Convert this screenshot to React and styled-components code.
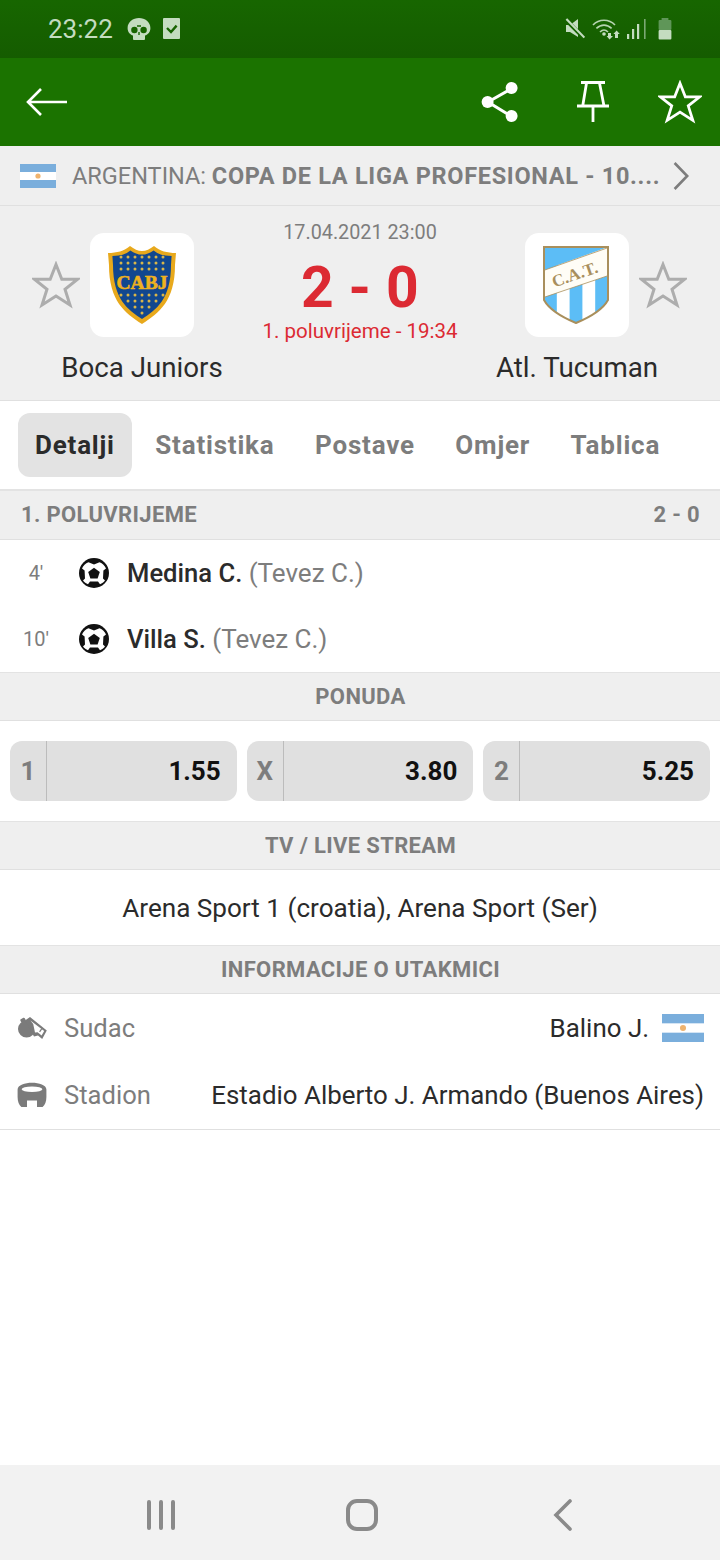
import React from 'react'
import styled, { createGlobalStyle } from 'styled-components'

const GlobalStyle = createGlobalStyle`
    html, body { margin: 0; padding: 0; background: #fff; }
    body { font-family: Roboto, "Noto Sans", sans-serif; }
    * { box-sizing: border-box; }
`

const Flag = ({ width, height }) => (
    <svg width={width} height={height} viewBox="0 0 36 24">
        <rect width="36" height="24" fill="#7aaedc" />
        <rect y="8" width="36" height="8" fill="#fff" />
        <circle cx="18" cy="12" r="2.6" fill="#efb36e" />
    </svg>
)

const Star = ({ size, color, stroke = 2 }) => (
    <svg width={size} height={size} viewBox="0 0 48 48">
        <path
            d="M24 3.5 L29.8 18.3 L45.6 18.3 L33 28.2 L38 44 L24 35 L10 44 L15 28.2 L2.4 18.3 L18.2 18.3 Z"
            fill="none"
            stroke={color}
            strokeWidth={stroke}
            strokeLinejoin="miter"
        />
    </svg>
)

const Ball = () => (
    <svg width="30" height="30" viewBox="0 0 30 30">
        <circle cx="15" cy="15" r="15" fill="#111" />
        <path d="M9.5 4.2 L15 6.6 L20.5 4.2 C23.6 5.4 25.8 7.6 27 10.4 L24.4 12.6 L24 20.4 L26 22.4 C24.6 24.2 23 25.4 21 26.2 L19 23.6 L11 23.6 L9 26.2 C7 25.4 5.4 24.2 4 22.4 L6 20.4 L5.6 12.6 L3 10.4 C4.2 7.6 6.4 5.4 9.5 4.2 Z" fill="#fff" />
        <path d="M15 9.8 L20.8 14 L18.6 20.4 L11.4 20.4 L9.2 14 Z" fill="#111" />
    </svg>
)

const Whistle = () => (
    <svg width="30" height="26" viewBox="0 0 30 26">
        <circle cx="9.6" cy="14" r="8.6" fill="#7b7b7b" />
        <rect x="3.6" y="3.4" width="5" height="4" rx="1" fill="#7b7b7b" transform="rotate(-30 6 5.4)" />
        <path d="M8 5.6 L13 2 L29.8 15.4 L25.2 24 L21 20.6 L17 21.6 Z" fill="#7b7b7b" />
        <path d="M13.4 5.4 L27.2 15.9 L24.6 20.6 L20.6 17.2 L18 17.4 L16.2 9 Z" fill="#fff" />
        <path d="M22.6 16.8 L24.8 13.6" stroke="#7b7b7b" strokeWidth="1.2" />
    </svg>
)

const Stadium = () => (
    <svg width="30" height="26" viewBox="0 0 30 26">
        <path
            d="M0.6 7.6 C0.6 3 8 0.8 15 0.8 C22 0.8 29.4 3 29.4 7.6 L29.4 15 C29.4 19.6 28 23 25.6 25 L20 25 L20 18.6 L10 18.6 L10 25 L4.4 25 C2 23 0.6 19.6 0.6 15 Z"
            fill="#7b7b7b"
        />
        <ellipse cx="15" cy="7.2" rx="10.4" ry="2.8" fill="#fff" />
    </svg>
)

const BocaCrest = () => (
    <svg width="70" height="80" viewBox="0 0 70 80">
        <path d="M35 79 C18 68 2 56 2 20 L1 8 C10 8 17 6 23 1 C27 4 31 6 35 6 C39 6 43 4 47 1 C53 6 60 8 69 8 L68 20 C68 56 52 68 35 79 Z" fill="#e8a91c" />
        <path d="M35 74 C21 65 6 54 6 20 L5.4 11 C13 11 19 9 23.4 5.4 C27 8 31 9.6 35 9.6 C39 9.6 43 8 46.6 5.4 C51 9 57 11 64.6 11 L64 20 C64 54 49 65 35 74 Z" fill="#11478f" />
        <text x="35" y="43.5" textAnchor="middle" fontFamily="Liberation Serif, serif" fontWeight="700" fontSize="19.5" fill="#efb21e" stroke="#efb21e" strokeWidth="0.6">CABJ</text>
        <g fill="#d9b64a">
            {[12, 18, 24].map((y, r) => [0, 1, 2, 3, 4, 5, 6].map(i => <circle key={`a${r}${i}`} cx={14 + i * 7} cy={y} r="1.5" />))}
            {[50, 56, 62, 68].map((y, r) => [0, 1, 2, 3, 4, 5, 6].slice(r, 7 - r).map(i => <circle key={`b${r}${i}`} cx={14 + i * 7} cy={y} r="1.5" />))}
        </g>
    </svg>
)

const shield = 'M2 2 L66 2 L66 55 C60 66 46 73 34 78 C22 73 8 66 2 55 Z'

const TucumanCrest = () => (
    <svg width="70" height="80" viewBox="0 0 70 80">
        <defs>
            <clipPath id="catShield"><path d={shield} /></clipPath>
        </defs>
        <g clipPath="url(#catShield)">
            <rect width="70" height="80" fill="#fff" />
            <path d="M2 2 L66 2 L2 25 Z" fill="#5cbdf6" />
            {[2, 27.6, 53.2].map(x => <rect key={x} x={x} y="20" width="12.8" height="60" fill="#5cbdf6" />)}
            <path d="M0 26 L68 2 L68 30 L0 53 Z" fill="#fffdf6" />
            <path d="M0 26 L68 2 M0 53 L68 30" stroke="#a98f5c" strokeWidth="0.8" />
        </g>
        <path d={shield} fill="none" stroke="#a98f5c" strokeWidth="2" />
        <text x="33" y="35" textAnchor="middle" fontFamily="Liberation Serif, serif" fontWeight="700" fontSize="17" fill="#a98f5c" transform="rotate(-19 33 30)">C.A.T.</text>
    </svg>
)

const events = [
    { minute: "4'", scorer: 'Medina C.', assist: '(Tevez C.)' },
    { minute: "10'", scorer: 'Villa S.', assist: '(Tevez C.)' },
]

const odds = [
    { label: '1', value: '1.55' },
    { label: 'X', value: '3.80' },
    { label: '2', value: '5.25' },
]

const tabs = ['Detalji', 'Statistika', 'Postave', 'Omjer', 'Tablica']

export default function App() {
    return (
        <Page>
            <GlobalStyle />
            <StatusBar>
                <StatusGroup>
                    <Clock>23:22</Clock>
                    <svg width="24" height="24" viewBox="0 0 24 24">
                        <path d="M12 1 C18 1 23.4 5 23.4 11 C23.4 15 21 17.6 18 18.6 L18 22 C18 22.8 17.4 23 16.6 23 L7.4 23 C6.6 23 6 22.8 6 22 L6 18.6 C3 17.6 0.6 15 0.6 11 C0.6 5 6 1 12 1 Z" fill="#c4dcc0" />
                        <circle cx="7.4" cy="13" r="3.2" fill="#176300" />
                        <circle cx="16.6" cy="13" r="3.2" fill="#176300" />
                        <path d="M10 9 L14 9 M12 15 L12 18" stroke="#176300" strokeWidth="1.4" />
                    </svg>
                    <svg width="18" height="22" viewBox="0 0 18 22">
                        <rect width="17" height="21" rx="1" fill="#c4dcc0" />
                        <path d="M4 10 L8 14 L13.6 7.6" fill="none" stroke="#176300" strokeWidth="2.4" />
                    </svg>
                </StatusGroup>
                <StatusIcons>
                    <svg width="20" height="22" viewBox="0 0 20 22">
                        <path d="M1 7 L5 7 L13 1 L13 19 L5 14 L1 14 Z" fill="#c4dcc0" />
                        <path d="M1 2 L19 20" stroke="#176300" strokeWidth="4" />
                        <path d="M1.4 1 L19.4 19.6" stroke="#c4dcc0" strokeWidth="2.2" />
                    </svg>
                    <svg width="28" height="22" viewBox="0 0 28 22">
                        <g fill="none" stroke="#b6d4b1" strokeWidth="1.6">
                            <path d="M1 7 C7 0.6 17 0.6 23 7" />
                            <path d="M4.4 10.4 C9 6 15 6 19.6 10.4" />
                            <path d="M8 14 C10.4 11.6 13.6 11.6 16 14" />
                        </g>
                        <circle cx="12" cy="16" r="1.8" fill="#c4dcc0" />
                        <path d="M16 15 L19 15 L19 18 L21 18 L17.5 21.4 L14.6 18 L16 18 Z M23 20 L23 16 L21.4 16 L24.6 12.6 L27.8 16 L26 16 L26 20 Z" fill="#c4dcc0" />
                    </svg>
                    <svg width="20" height="20" viewBox="0 0 20 20">
                        <rect x="0" y="15" width="2.2" height="5" fill="#c4dcc0" />
                        <rect x="5" y="10" width="2.2" height="10" fill="#c4dcc0" />
                        <rect x="10" y="5" width="2.2" height="15" fill="#c4dcc0" />
                        <rect x="17" y="0" width="1.6" height="20" fill="#7ba873" />
                    </svg>
                    <Battery>
                        <svg width="14" height="22" viewBox="0 0 14 22">
                            <rect x="3.6" y="0" width="6.8" height="3" fill="#5f9658" />
                            <rect x="0.6" y="2" width="12.8" height="10" rx="1" fill="#5f9658" />
                            <rect x="0.6" y="12" width="12.8" height="9.6" rx="1" fill="#c4dcc0" />
                        </svg>
                    </Battery>
                </StatusIcons>
            </StatusBar>

            <AppBar>
                <svg width="42" height="30" viewBox="0 0 42 30">
                    <path d="M41 15 L2 15 M15 2 L2 15 L15 28" fill="none" stroke="#fff" strokeWidth="2.6" />
                </svg>
                <AppActions>
                    <svg width="47" height="42" viewBox="0 0 47 42">
                        <path d="M30 8 L7 21 L30 35" fill="none" stroke="#fff" strokeWidth="3" />
                        <circle cx="30.6" cy="7" r="6" fill="#fff" />
                        <circle cx="6.6" cy="21" r="6" fill="#fff" />
                        <circle cx="30.6" cy="35" r="6" fill="#fff" />
                    </svg>
                    <svg width="34" height="44" viewBox="0 0 34 44">
                        <path d="M5 2.5 L29 2.5 M10.6 2.5 L6.7 26 M23.4 2.5 L28 26 M1 26 L33 26 M17 26 L17 42" fill="none" stroke="#fff" strokeWidth="2.8" />
                    </svg>
                    <Star size={44} color="#fff" stroke={3} />
                </AppActions>
            </AppBar>

            <LeagueBar>
                <Flag width={36} height={24} />
                <LeagueText>ARGENTINA: <b>COPA DE LA LIGA PROFESIONAL - 10....</b></LeagueText>
                <svg width="16" height="28" viewBox="0 0 16 28">
                    <path d="M1.6 1 L14.2 14 L1.6 27" fill="none" stroke="#7d7d7d" strokeWidth="2.6" />
                </svg>
            </LeagueBar>

            <MatchHeader>
                <Team>
                    <TeamRow>
                        <Star size={48} color="#adadad" stroke={3} />
                        <Crest><BocaCrest /></Crest>
                    </TeamRow>
                    <TeamName>Boca Juniors</TeamName>
                </Team>
                <Score>
                    <MatchDate>17.04.2021 23:00</MatchDate>
                    <ScoreValue>2 - 0</ScoreValue>
                    <MatchPhase>1. poluvrijeme - 19:34</MatchPhase>
                </Score>
                <Team $away>
                    <TeamRow>
                        <Crest><TucumanCrest /></Crest>
                        <Star size={48} color="#adadad" stroke={3} />
                    </TeamRow>
                    <TeamName $away>Atl. Tucuman</TeamName>
                </Team>
            </MatchHeader>

            <Tabs>
                {tabs.map((tab, i) => <Tab key={tab} $active={i === 0}>{tab}</Tab>)}
            </Tabs>

            <SectionHeader $spread>
                <span>1. POLUVRIJEME</span>
                <span>2 - 0</span>
            </SectionHeader>
            <Events>
                {events.map(e => (
                    <EventRow key={e.minute}>
                        <Minute>{e.minute}</Minute>
                        <Ball />
                        <Scorer>{e.scorer} <Assist>{e.assist}</Assist></Scorer>
                    </EventRow>
                ))}
            </Events>

            <SectionHeader>PONUDA</SectionHeader>
            <OddsRow>
                {odds.map(o => (
                    <Odd key={o.label}>
                        <OddLabel>{o.label}</OddLabel>
                        <OddValue>{o.value}</OddValue>
                    </Odd>
                ))}
            </OddsRow>

            <SectionHeader>TV / LIVE STREAM</SectionHeader>
            <StreamRow>Arena Sport 1 (croatia), Arena Sport (Ser)</StreamRow>

            <SectionHeader>INFORMACIJE O UTAKMICI</SectionHeader>
            <Info>
                <InfoRow>
                    <Whistle />
                    <InfoLabel>Sudac</InfoLabel>
                    <InfoValue>Balino J. <Flag width={42} height={28} /></InfoValue>
                </InfoRow>
                <InfoRow>
                    <Stadium />
                    <InfoLabel>Stadion</InfoLabel>
                    <InfoValue>Estadio Alberto J. Armando (Buenos Aires)</InfoValue>
                </InfoRow>
            </Info>

            <Spacer />

            <NavBar>
                <svg width="32" height="32" viewBox="0 0 32 32">
                    <path d="M4 3 L4 29 M16 3 L16 29 M28 3 L28 29" stroke="#8a8a8a" strokeWidth="4" strokeLinecap="round" />
                </svg>
                <svg width="32" height="32" viewBox="0 0 32 32">
                    <rect x="2" y="2" width="28" height="28" rx="9" fill="none" stroke="#8a8a8a" strokeWidth="4" />
                </svg>
                <svg width="26" height="32" viewBox="0 0 26 32">
                    <path d="M23 2 L9 16 L23 30" fill="none" stroke="#8a8a8a" strokeWidth="3.6" strokeLinecap="round" />
                </svg>
            </NavBar>
        </Page>
    )
}

const Page = styled.div`
    width: 720px;
    height: 1560px;
    display: flex;
    flex-direction: column;
    overflow: hidden;
    background: #ffffff;
`
const StatusBar = styled.div`
    height: 58px;
    flex: none;
    padding: 0 46px 0 48px;
    display: flex;
    align-items: center;
    justify-content: space-between;
    background: linear-gradient(#176600, #155c00);
`
const StatusGroup = styled.div`
    display: flex;
    align-items: center;
    gap: 12px;
`
const Clock = styled.span`
    color: #c4dcc0;
    font-size: 26px;
    margin-right: 2px;
`
const StatusIcons = styled.div`
    display: flex;
    align-items: center;
    gap: 7px;
`
const Battery = styled.span`
    display: flex;
    margin-left: 4px;
    margin-right: 2px;
`
const AppBar = styled.div`
    height: 88px;
    flex: none;
    padding: 0 18px 0 26px;
    display: flex;
    align-items: center;
    justify-content: space-between;
    background: #1b7300;
`
const AppActions = styled.div`
    display: flex;
    align-items: center;
    gap: 48px;
`
const LeagueBar = styled.div`
    height: 60px;
    flex: none;
    padding: 0 31px 0 20px;
    display: flex;
    align-items: center;
    gap: 16px;
    background: #efefef;
    border-bottom: 1px solid #e0e0e0;
    svg { flex: none; }
`
const LeagueText = styled.div`
    flex: 1;
    min-width: 0;
    color: #7d7d7d;
    font-size: 23.5px;
    white-space: nowrap;
    b { font-weight: 700; letter-spacing: 0.7px; }
`
const MatchHeader = styled.div`
    height: 195px;
    flex: none;
    padding-top: 27px;
    display: flex;
    background: #efefef;
    border-bottom: 1px solid #e0e0e0;
`
const Team = styled.div`
    width: 250px;
    flex: none;
    display: flex;
    flex-direction: column;
    align-items: flex-start;
    padding-left: ${p => (p.$away ? '55px' : '32px')};
`
const TeamRow = styled.div`
    display: flex;
    align-items: center;
    gap: 10px;
`
const Crest = styled.div`
    width: 104px;
    height: 104px;
    border-radius: 14px;
    background: #ffffff;
    display: flex;
    align-items: center;
    justify-content: center;
`
const TeamName = styled.div`
    width: 220px;
    margin-top: 14px;
    margin-left: ${p => (p.$away ? '-58px' : '0')};
    text-align: center;
    color: #2b2b2b;
    font-size: 27.7px;
    line-height: 34px;
    white-space: nowrap;
`
const Score = styled.div`
    flex: 1;
    display: flex;
    flex-direction: column;
    align-items: center;
`
const MatchDate = styled.div`
    margin-top: -13px;
    color: #7d7d7d;
    font-size: 19.8px;
    line-height: 26px;
`
const ScoreValue = styled.div`
    margin: 9px 0 -2px;
    color: #dc2a33;
    font-size: 57px;
    font-weight: 700;
    line-height: 66px;
    letter-spacing: 0.4px;
`
const MatchPhase = styled.div`
    color: #dc2a33;
    font-size: 20.5px;
    line-height: 24px;
`
const Tabs = styled.div`
    height: 89px;
    flex: none;
    padding: 12px 18px 12px;
    display: flex;
    gap: 6.5px;
    background: #ffffff;
    border-bottom: 1px solid #e3e3e3;
`
const Tab = styled.div`
    height: 64px;
    padding: 0 17px;
    display: flex;
    align-items: center;
    border-radius: 12px;
    font-size: 26px;
    font-weight: 700;
    letter-spacing: 0.8px;
    color: ${p => (p.$active ? '#2b2b2b' : '#7d7d7d')};
    background: ${p => (p.$active ? '#e3e3e3' : 'transparent')};
`
const SectionHeader = styled.div`
    height: ${p => (p.$spread ? '50px' : '49px')};
    flex: none;
    padding: 0 20px ${p => (p.$spread ? '2px' : '0')} 21px;
    display: flex;
    align-items: center;
    justify-content: ${p => (p.$spread ? 'space-between' : 'center')};
    color: #7d7d7d;
    font-size: 22px;
    font-weight: 700;
    letter-spacing: 0.35px;
    background: #efefef;
    border-top: 1px solid #e3e3e3;
    border-bottom: 1px solid #e0e0e0;
`
const Events = styled.div`
    height: 132px;
    flex: none;
    display: flex;
    flex-direction: column;
`
const EventRow = styled.div`
    height: 66px;
    display: flex;
    align-items: center;
`
const Minute = styled.span`
    width: 72px;
    margin-right: 7px;
    text-align: center;
    color: #7d7d7d;
    font-size: 20px;
`
const Scorer = styled.span`
    margin-left: 18px;
    color: #2b2b2b;
    font-size: 25.6px;
    font-weight: 500;
`
const Assist = styled.span`
    color: #7d7d7d;
    font-size: 26px;
    font-weight: 400;
`
const OddsRow = styled.div`
    height: 100px;
    flex: none;
    padding: 20px 10px;
    display: flex;
    gap: 10px;
`
const Odd = styled.div`
    flex: 1;
    display: flex;
    align-items: center;
    height: 60px;
    border-radius: 12px;
    background: #e0e0e0;
`
const OddLabel = styled.span`
    width: 37px;
    height: 100%;
    display: flex;
    align-items: center;
    justify-content: center;
    color: #7d7d7d;
    font-size: 26px;
    font-weight: 700;
    border-right: 1px solid #bcbcbc;
`
const OddValue = styled.span`
    flex: 1;
    padding-right: 16px;
    text-align: right;
    color: #111111;
    font-size: 26px;
    font-weight: 700;
`
const StreamRow = styled.div`
    height: 75px;
    flex: none;
    display: flex;
    align-items: center;
    justify-content: center;
    color: #2b2b2b;
    font-size: 26.1px;
`
const Info = styled.div`
    flex: none;
    height: 136px;
    display: flex;
    flex-direction: column;
    border-bottom: 1px solid #e0e0e0;
`
const InfoRow = styled.div`
    height: 67px;
    padding: 0 16px 0 17px;
    display: flex;
    align-items: center;
    gap: 17px;
`
const InfoLabel = styled.span`
    color: #7d7d7d;
    font-size: 25.6px;
`
const InfoValue = styled.span`
    margin-left: auto;
    display: flex;
    align-items: center;
    gap: 13px;
    color: #2b2b2b;
    font-size: 25.9px;
`
const Spacer = styled.div`
    flex: 1;
`
const NavBar = styled.div`
    height: 95px;
    flex: none;
    padding: 5px 0 0 145px;
    display: flex;
    align-items: center;
    gap: 169px;
    background: #f2f2f2;
`
